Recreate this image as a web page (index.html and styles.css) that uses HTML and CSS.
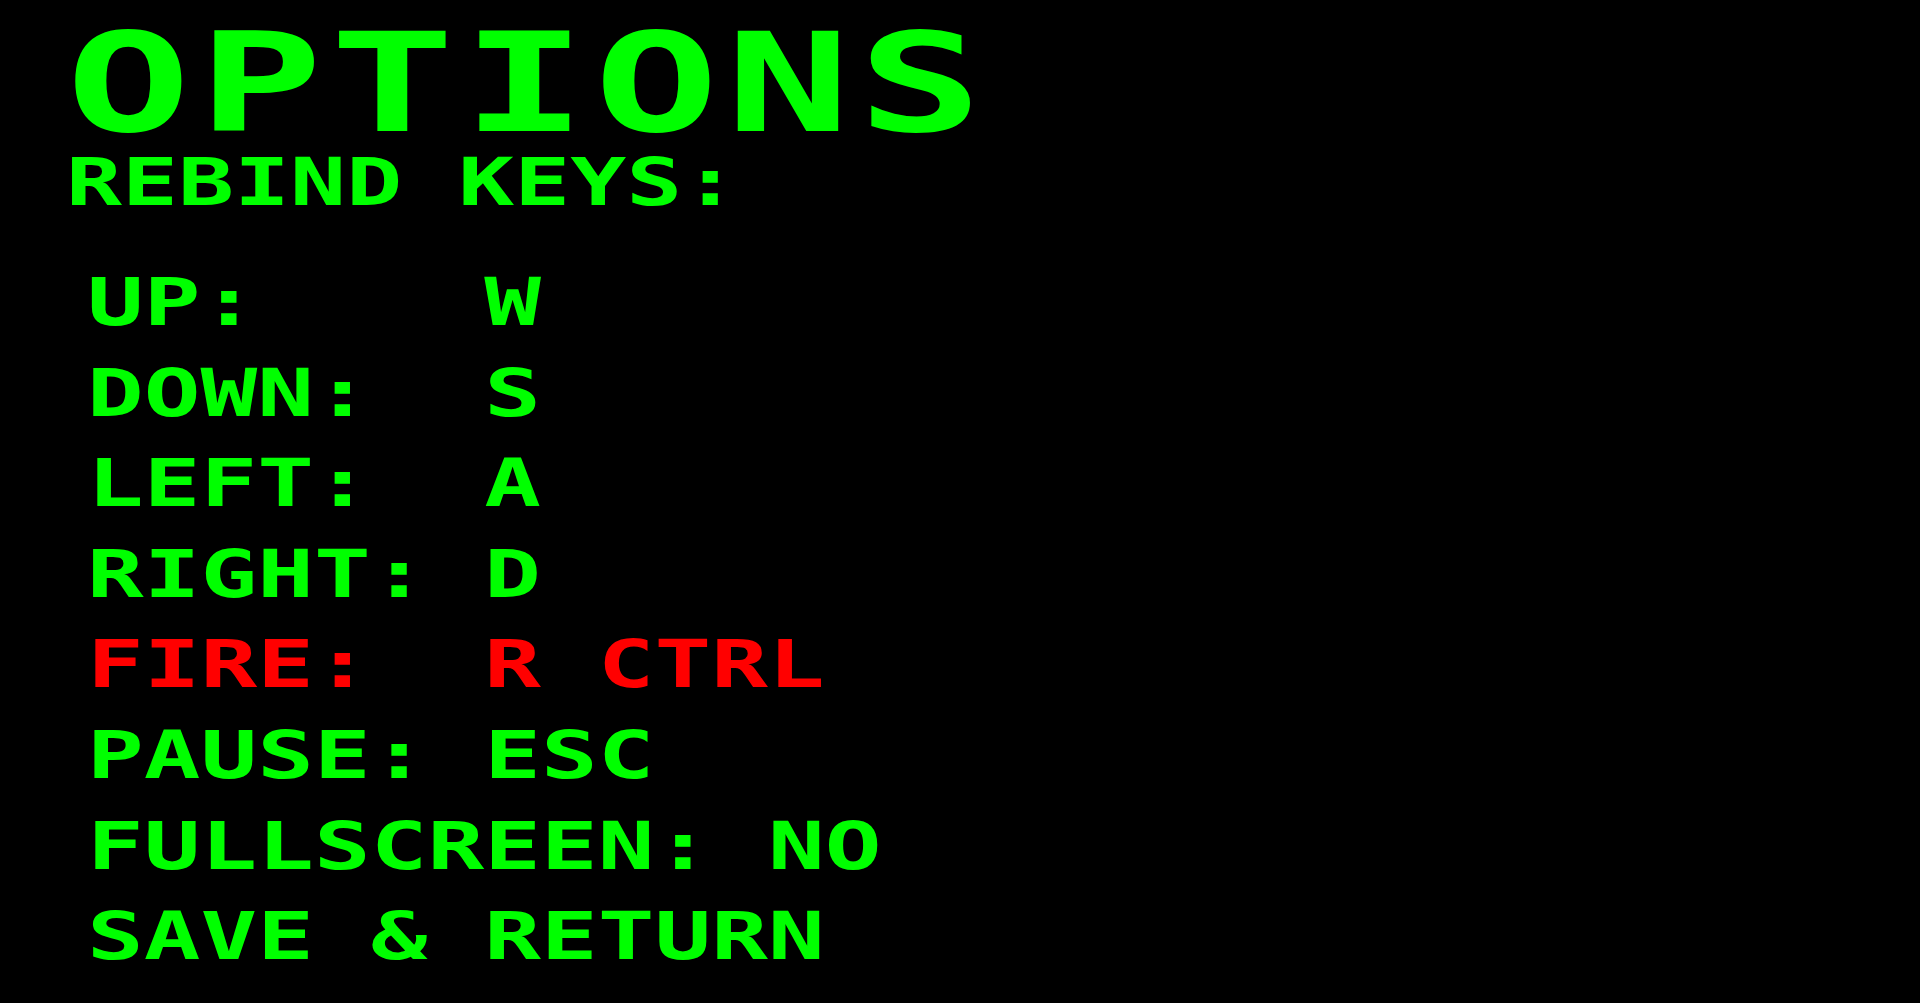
FILE: index.html
```html
<!DOCTYPE html>
<html lang="en">
<head>
<meta charset="utf-8">
<title>Options</title>
<link rel="stylesheet" href="styles.css">
</head>
<body>
<main class="screen">
  <h1 class="title">OPTIONS</h1>
  <h2 class="subtitle">REBIND KEYS:</h2>
  <ul class="menu">
    <li class="item">UP:    W</li>
    <li class="item">DOWN:  S</li>
    <li class="item">LEFT:  A</li>
    <li class="item">RIGHT: D</li>
    <li class="item selected">FIRE:  R CTRL</li>
    <li class="item">PAUSE: ESC</li>
    <li class="item">FULLSCREEN: NO</li>
    <li class="item">SAVE &amp; RETURN</li>
  </ul>
</main>
</body>
</html>
```
FILE: styles.css
```css
html, body {
  margin: 0;
  padding: 0;
  background: #000;
}

body {
  height: 1003px;
  overflow: hidden;
  font-family: "DejaVu Sans Mono", "Liberation Mono", monospace;
  font-weight: bold;
  color: #00ff00;
}

.screen {
  padding: 25px 0 0 60px;
}

.title,
.subtitle,
.item {
  margin: 0;
  width: max-content;
  white-space: pre;
  transform-origin: left top;
}

.title {
  margin-left: 6px;
  font-size: 138px;
  line-height: 118px;
  letter-spacing: 4.9px;
  transform: scaleX(1.5);
}

.subtitle {
  margin: 1px 0 0 6px;
  font-size: 66px;
  line-height: 78px;
  transform: scaleX(1.41);
}

.menu {
  list-style: none;
  margin: 36px 0 0 0;
  padding: 0 0 0 27px;
}

.item {
  font-size: 66px;
  line-height: 90.6px;
  transform: scaleX(1.428);
}

.item.selected {
  color: #ff0000;
}
```
